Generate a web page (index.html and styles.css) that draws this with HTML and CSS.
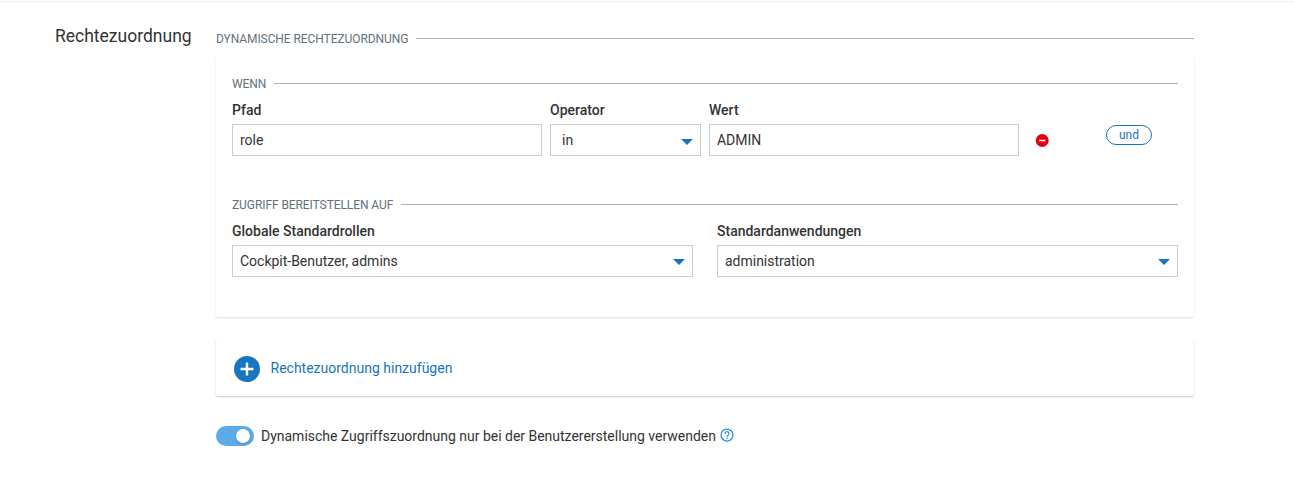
FILE: index.html
```html
<!DOCTYPE html>
<html lang="de">
<head>
<meta charset="utf-8">
<title>Rechtezuordnung</title>
<link rel="stylesheet" href="styles.css">
</head>
<body>
<main class="page">
  <h2 class="title">Rechtezuordnung</h2>
  <section class="content">
    <div class="legend"><span>DYNAMISCHE RECHTEZUORDNUNG</span></div>
    <div class="card rule">
      <div class="legend"><span>WENN</span></div>
      <div class="condition">
        <div class="field path"><label>Pfad</label><div class="input">role</div></div>
        <div class="field operator"><label>Operator</label><div class="input select">in<i class="caret"></i></div></div>
        <div class="field path"><label>Wert</label><div class="input">ADMIN</div></div>
        <svg class="remove" width="14" height="14" viewBox="0 0 14 14"><circle cx="7.2" cy="6.5" r="6.5" fill="#e2000f"/><path d="M4 6.5h6.4" stroke="#fff" stroke-width="1.5"/></svg>
        <button class="and">und</button>
      </div>
      <div class="legend access"><span>ZUGRIFF BEREITSTELLEN AUF</span></div>
      <div class="grants">
        <div class="field"><label>Globale Standardrollen</label><div class="input select">Cockpit-Benutzer, admins<i class="caret"></i></div></div>
        <div class="field"><label>Standardanwendungen</label><div class="input select">administration<i class="caret"></i></div></div>
      </div>
    </div>
    <div class="card add">
      <svg width="26" height="26" viewBox="0 0 26 26"><circle cx="13" cy="13" r="13" fill="#1776bf"/><path d="M13 6.5v13M6.5 13h13" stroke="#fff" stroke-width="2.4"/></svg>
      <span>Rechtezuordnung hinzufügen</span>
    </div>
    <div class="toggle-row">
      <div class="toggle"><i class="knob"></i></div>
      <span class="toggle-label">Dynamische Zugriffszuordnung nur bei der Benutzererstellung verwenden</span>
      <svg class="help" width="14" height="14" viewBox="0 0 14 14" fill="none" stroke="#2490e8" stroke-width="1.25"><circle cx="7" cy="7" r="6"/><path d="M5 5.7a2 2 0 1 1 3.2 1.5c-.8.5-1.2.8-1.2 1.5M7 9.5v1.4"/></svg>
    </div>
  </section>
</main>
</body>
</html>
```
FILE: styles.css
```css
* { box-sizing: border-box; }
body { margin: 0; background: #fff; color: #333; font: 14px/20px Roboto, sans-serif; }
.page { display: flex; height: 482px; padding: 1px 0 0 55px; background: linear-gradient(#eee, #eee) 0 1px / 100% 1px no-repeat; }
.title { width: 161px; margin: 23px 0 0; font-size: 17.5px; line-height: 24px; font-weight: 400; }
.content { width: 978px; padding-top: 28px; }
.legend { display: flex; align-items: center; gap: 8px; height: 20px; font-size: 12px; letter-spacing: -.08px; color: #63717d; }
.legend::after { content: ""; flex: 1; height: 1px; margin-bottom: 2px; background: #adb3b8; }
.card { background: #fff; border-radius: 2px; box-shadow: 0 1px 2px rgba(0, 0, 0, .22); }
.rule { height: 261px; margin-top: 7px; padding: 18px 16px 0; box-shadow: 0 1px 2px rgba(0, 0, 0, .13); }
.condition { display: flex; margin-top: 6px; }
.field { display: flex; flex-direction: column; gap: 4px; }
.field label { font-weight: 500; line-height: 20px; }
.path { width: 310px; margin-right: 8px; }
.operator { width: 151px; margin-right: 8px; }
.input { display: flex; align-items: center; height: 32px; padding: 0 7px; border: 1px solid #c9ced2; letter-spacing: -.01px; }
.select { justify-content: space-between; }
.operator .input { padding-left: 11px; }
.caret { margin-top: 3px; border: 6px solid transparent; border-top-color: #1776bf; border-bottom: 0; }
.grants .caret { margin-top: 2px; }
.remove { margin: 34px 0 0 8px; }
.and { width: 46px; height: 20px; margin: 25px 0 0 57px; padding: 1px 0 0; border: 1px solid #1776bf; border-radius: 10px; background: #fff; color: #1776bf; font: 12px/17px Roboto, sans-serif; }
.access { margin-top: 39px; }
.grants { display: grid; grid-template-columns: 1fr 1fr; gap: 24px; margin-top: 6px; }
.add { display: flex; align-items: center; gap: 10.5px; height: 56px; margin-top: 23px; padding: 1px 18px 0; color: #1776bf; }
.add span { padding-bottom: 2px; }
.toggle-row { display: flex; align-items: center; height: 20px; margin-top: 30px; }
.toggle { width: 38px; height: 20px; margin-right: 7px; padding: 3px 4px; border-radius: 10px; background: #5baaea; }
.toggle-label { letter-spacing: -.012px; }
.knob { display: block; width: 14px; height: 14px; margin-left: auto; border-radius: 50%; background: #fff; box-shadow: 0 1px 2px rgba(0, 0, 0, .2); }
.help { margin: 0 0 2px 4px; }
```
